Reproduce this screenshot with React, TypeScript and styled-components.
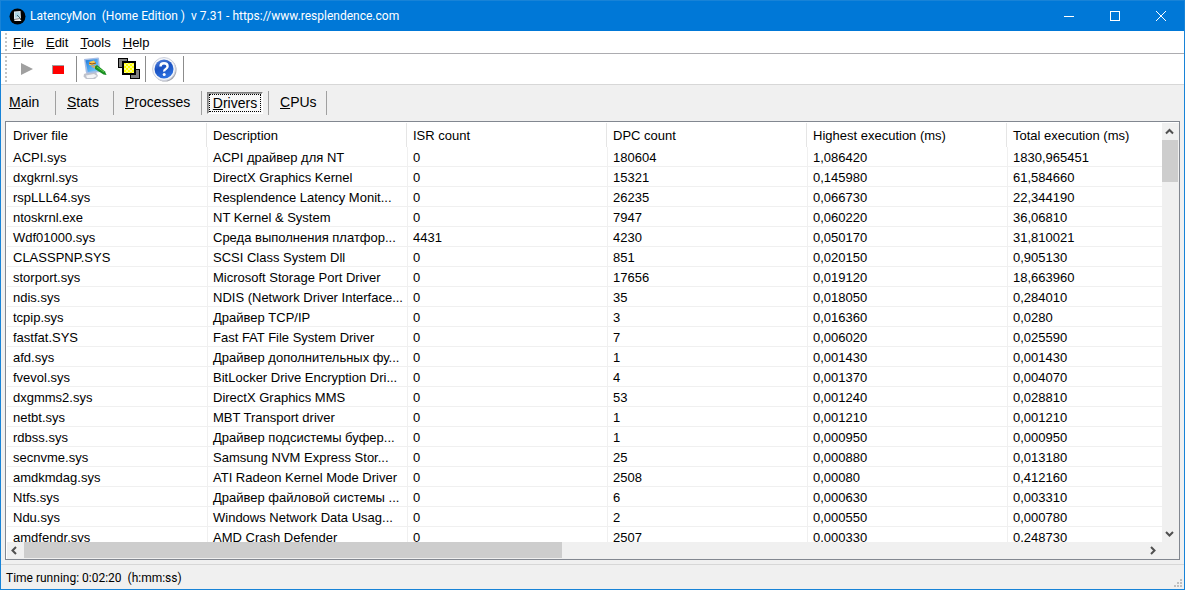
import React from "react";
import styled, { createGlobalStyle, css } from "styled-components";

const GlobalStyle = createGlobalStyle`
  * { box-sizing: border-box; }
  body {
    margin: 0;
    background: #f0f0f0;
    color: #000;
    font: 13px/20px "Liberation Sans", Arial, sans-serif;
  }
  button {
    margin: 0;
    padding: 0;
    border: 0;
    background: none;
    color: inherit;
    font: inherit;
  }
`;

const Window = styled.div`
  display: flex;
  flex-direction: column;
  height: 100vh;
  border: 1px solid #1883d7;
  border-top: 0;
  background: #f0f0f0;
`;

const TitleBar = styled.header`
  display: flex;
  align-items: center;
  flex: none;
  height: 31px;
  padding-left: 8px;
  border-top: 1px solid #1883d7;
  background: #0078d7;
  color: #fff;
`;

const Title = styled.h1`
  flex: 1;
  margin: 0 0 0 4px;
  font: 400 12px/16px Roboto, "Segoe UI", sans-serif;
  white-space: pre;
`;

const CaptionButton = styled.button`
  display: flex;
  align-items: center;
  justify-content: center;
  width: 46px;
  height: 30px;
`;

const MenuBar = styled.nav`
  display: flex;
  align-items: center;
  flex: none;
  height: 23px;
  padding-left: 4px;
  border-bottom: 1px solid #acacb0;
  background: #fff;
`;

const MenuItem = styled.button`
  padding: 2px 6px 0;
`;

const Gripper = styled.span`
  align-self: stretch;
  width: 2px;
  margin-top: 2px;
  background: repeating-linear-gradient(#c4c4c4 0 2px, transparent 2px 4px);
`;

const ToolBar = styled.div`
  display: flex;
  align-items: center;
  flex: none;
  height: 31px;
  padding-left: 4px;
  border-bottom: 1px solid #d7d7d7;
  background: #fff;
`;

const ToolButton = styled.button<{ $width: number }>`
  display: flex;
  align-items: center;
  justify-content: center;
  width: ${(p) => p.$width}px;
  height: 28px;
`;

const ToolSeparator = styled.span<{ $gap?: number }>`
  width: 1px;
  height: 26px;
  margin-left: ${(p) => p.$gap ?? 0}px;
  background: #8c8c8c;
`;

const TabBar = styled.div`
  display: flex;
  align-items: center;
  flex: none;
  height: 36px;
`;

const TabSlot = styled.div<{ $width: number; $inset: number }>`
  display: flex;
  align-items: center;
  width: ${(p) => p.$width}px;
  height: 24px;
  padding-left: ${(p) => p.$inset}px;
  border-right: 1px solid #a0a0a0;
`;

const TabButton = styled.button<{ $active: boolean }>`
  height: 22px;
  padding-bottom: 2px;
  font-size: 14px;
  line-height: 20px;
  ${(p) =>
    p.$active &&
    css`
      width: 56px;
      padding: 0;
      border: 1px solid;
      border-color: #808080 #fff #fff #808080;
      background: #f8f8f8;
      box-shadow: inset 1px 1px #a0a0a0;
      outline: 1px dotted #000;
      outline-offset: -3px;
    `}
`;

const ListFrame = styled.main`
  display: grid;
  grid-template-columns: minmax(0, 1fr) 17px;
  grid-template-rows: minmax(0, 1fr) 17px;
  flex: 1;
  min-height: 0;
  margin: 0 4px 4px;
  padding: 1px 0 0 1px;
  border: 1px solid #828790;
  background: #fff;
`;

const Viewport = styled.div`
  overflow: hidden;
`;

const DriverTable = styled.table`
  width: 1200px;
  table-layout: fixed;
  border-collapse: separate;
  border-spacing: 0;
`;

const HeadCell = styled.th`
  height: 24px;
  padding: 2px 6px 0;
  border-right: 1px solid #e5e5e5;
  font-weight: 400;
  text-align: left;
`;

const Cell = styled.td`
  height: 20px;
  padding: 3px 0 0 6px;
  border-bottom: 1px solid #f0f0f0;
  line-height: 16px;
  white-space: nowrap;
  overflow: hidden;

  & + & {
    padding-left: 5px;
    border-left: 1px solid #f0f0f0;
  }
`;

const ScrollBar = styled.div<{ $vertical?: boolean }>`
  display: flex;
  flex-direction: ${(p) => (p.$vertical ? "column" : "row")};
  background: #f0f0f0;
`;

const ArrowButton = styled.button`
  display: flex;
  align-items: center;
  justify-content: center;
  flex: none;
  width: 17px;
  height: 17px;
  padding: 0 2px 1px 0;
`;

const Track = styled.div<{ $vertical?: boolean }>`
  display: flex;
  flex-direction: ${(p) => (p.$vertical ? "column" : "row")};
  flex: 1;
`;

const Thumb = styled.div<{ $size: string }>`
  flex: 0 0 ${(p) => p.$size};
  margin: 0 1px 1px 0;
  background: #cdcdcd;
`;

const Corner = styled.div`
  background: #f0f0f0;
`;

const StatusBar = styled.footer`
  display: flex;
  align-items: center;
  justify-content: space-between;
  flex: none;
  height: 25px;
  padding: 2px 2px 0 5px;
  border-top: 1px solid #d7d7d7;
  font: 12px/16px Roboto, "Segoe UI", sans-serif;
  white-space: pre;
`;

const Grip = styled.svg`
  align-self: flex-end;
  margin-bottom: 2px;
`;

type Direction = "up" | "down" | "left" | "right";

const chevrons: Record<Direction, string> = {
  up: "M1 6.500 4.500 3 8 6.500",
  down: "M1 3 4.500 6.500 8 3",
  left: "M6 1 2.500 4.500 6 8",
  right: "M3 1 6.500 4.500 3 8",
};

const Chevron = ({ to }: { to: Direction }) => (
  <svg width="9" height="9" viewBox="0 0 9 9" fill="none" stroke="#505050" strokeWidth="2">
    <path d={chevrons[to]} />
  </svg>
);

const AppIcon = () => (
  <svg width="17" height="17" viewBox="0 0 17 17">
    <circle cx="8.500" cy="8.500" r="8" fill="#000" />
    <path d="M5 3.500 11.500 3 12 10.500 5 11Z" fill="#dfe9ee" />
    <path d="M6 4.500 10.500 4.200 10.800 9 6 9.500Z" fill="#a9d3e5" />
    <path d="M5 11.500 11 11 12.500 13H5.500Z" fill="#eee" />
    <path d="m8 7 4 4" stroke="#48676e" />
  </svg>
);

const MonitorIcon = () => (
  <svg width="24" height="24" viewBox="0 0 24 24">
    <defs>
      <linearGradient id="screen" x1="0" y1="0" x2="1" y2="1">
        <stop offset="0" stopColor="#1d79da" />
        <stop offset="1" stopColor="#80d4ff" />
      </linearGradient>
    </defs>
    <path d="M5 15.500 13 15 15 19 12 22 3 22 0.500 19.500 1 17Z" fill="#c0c3cc" />
    <path d="M3 18.500 11 17 14 19 10 21H4Z" fill="#f3f4f6" />
    <path d="m1 2 14-1.500q1 0 1 1L17.500 15l-13 1.500Q3 16 2.800 15Z" fill="#a6bde5" />
    <path d="m2.500 3.300 12-1.400 1.300 11.600-11 1.500Z" fill="url(#screen)" />
    <path d="m6 5 5-1.500 2 3-4 2-3-.5Z" fill="#f8c24c" />
    <path d="m6 6 3 1 4-1" fill="none" stroke="#8b4c19" />
    <path d="m8 9.500 5-1.500 3 2.500-2 2Z" fill="#d5ac60" />
    <path d="m12 9.500 2-1.500 8 6.500 1.500 3.500-3-.5-8.500-5.500Z" fill="#188d22" />
    <path d="m14 10 7 5" stroke="#66ce4e" />
  </svg>
);

const WindowsIcon = () => (
  <svg width="23" height="22" viewBox="0 0 23 22" shapeRendering="crispEdges">
    <defs>
      <pattern id="check" width="4" height="4" patternUnits="userSpaceOnUse">
        <path fill="#ff0" d="M0 0h4v4H0z" />
        <g fill="#fff" fillOpacity="0.8" shapeRendering="auto">
          <circle cx="1" cy="1" r="0.900" />
          <circle cx="3" cy="3" r="0.900" />
        </g>
      </pattern>
    </defs>
    <path fill="#808080" stroke="#000" d="M.5.5h9v9h-9zM12.500 11.500h9v9h-9z" />
    <path fill="url(#check)" stroke="#000" strokeWidth="2" d="M5 4h12v12H5z" />
  </svg>
);

const HelpIcon = () => (
  <svg width="25" height="25" viewBox="0 0 25 25">
    <defs>
      <linearGradient id="globe" x1="0" y1="0" x2="0.4" y2="1">
        <stop offset="0" stopColor="#5b88df" />
        <stop offset="0.5" stopColor="#1a52c2" />
        <stop offset="1" stopColor="#2c70df" />
      </linearGradient>
    </defs>
    <circle cx="13" cy="13" r="11.500" fill="#a4a7b0" />
    <circle cx="12" cy="12" r="11.500" fill="#f3f5fa" stroke="#ccd0dc" />
    <circle cx="12" cy="12" r="9.500" fill="url(#globe)" />
    <path
      d="M8.500 9.500Q8.500 6.300 12 6.300T15.600 9.300Q15.600 11 13.800 12T12.200 14.500"
      fill="none"
      stroke="#fff"
      strokeWidth="2.400"
    />
    <circle cx="12.200" cy="17.500" r="1.500" fill="#fff" />
  </svg>
);

const columns = [
  "Driver file",
  "Description",
  "ISR count",
  "DPC count",
  "Highest execution (ms)",
  "Total execution (ms)",
];

const drivers: string[][] = [
  ["ACPI.sys", "ACPI драйвер для NT", "0", "180604", "1,086420", "1830,965451"],
  ["dxgkrnl.sys", "DirectX Graphics Kernel", "0", "15321", "0,145980", "61,584660"],
  ["rspLLL64.sys", "Resplendence Latency Monit...", "0", "26235", "0,066730", "22,344190"],
  ["ntoskrnl.exe", "NT Kernel & System", "0", "7947", "0,060220", "36,06810"],
  ["Wdf01000.sys", "Среда выполнения платфор...", "4431", "4230", "0,050170", "31,810021"],
  ["CLASSPNP.SYS", "SCSI Class System Dll", "0", "851", "0,020150", "0,905130"],
  ["storport.sys", "Microsoft Storage Port Driver", "0", "17656", "0,019120", "18,663960"],
  ["ndis.sys", "NDIS (Network Driver Interface...", "0", "35", "0,018050", "0,284010"],
  ["tcpip.sys", "Драйвер TCP/IP", "0", "3", "0,016360", "0,0280"],
  ["fastfat.SYS", "Fast FAT File System Driver", "0", "7", "0,006020", "0,025590"],
  ["afd.sys", "Драйвер дополнительных фу...", "0", "1", "0,001430", "0,001430"],
  ["fvevol.sys", "BitLocker Drive Encryption Dri...", "0", "4", "0,001370", "0,004070"],
  ["dxgmms2.sys", "DirectX Graphics MMS", "0", "53", "0,001240", "0,028810"],
  ["netbt.sys", "MBT Transport driver", "0", "1", "0,001210", "0,001210"],
  ["rdbss.sys", "Драйвер подсистемы буфер...", "0", "1", "0,000950", "0,000950"],
  ["secnvme.sys", "Samsung NVM Express Stor...", "0", "25", "0,000880", "0,013180"],
  ["amdkmdag.sys", "ATI Radeon Kernel Mode Driver", "0", "2508", "0,00080", "0,412160"],
  ["Ntfs.sys", "Драйвер файловой системы ...", "0", "6", "0,000630", "0,003310"],
  ["Ndu.sys", "Windows Network Data Usag...", "0", "2", "0,000550", "0,000780"],
  ["amdfendr.sys", "AMD Crash Defender", "0", "2507", "0,000330", "0,248730"],
];

const tabs = [
  { label: "Main", width: 55, inset: 8 },
  { label: "Stats", width: 58, inset: 11 },
  { label: "Processes", width: 88, inset: 11 },
  { label: "Drivers", width: 67, inset: 5 },
  { label: "CPUs", width: 58, inset: 11 },
];

const Mnemonic = ({ text }: { text: string }) => (
  <>
    <u>{text[0]}</u>
    {text.slice(1)}
  </>
);

export default function App() {
  const [active, setActive] = React.useState("Drivers");
  return (
    <Window>
      <GlobalStyle />
      <TitleBar>
        <AppIcon />
        <Title>{"LatencyMon  (Home Edition )  v 7.31 - https://www.resplendence.com"}</Title>
        <CaptionButton aria-label="Minimize">
          <svg width="10" height="10" shapeRendering="crispEdges">
            <path d="M0 5.500h10" stroke="#fff" />
          </svg>
        </CaptionButton>
        <CaptionButton aria-label="Maximize">
          <svg width="10" height="10" shapeRendering="crispEdges">
            <path d="M.5.5h9v9h-9z" fill="none" stroke="#fff" />
          </svg>
        </CaptionButton>
        <CaptionButton aria-label="Close">
          <svg width="10" height="10">
            <path d="m0 0 10 10M10 0 0 10" stroke="#fff" />
          </svg>
        </CaptionButton>
      </TitleBar>
      <MenuBar>
        <Gripper />
        {["File", "Edit", "Tools", "Help"].map((item) => (
          <MenuItem key={item}>
            <Mnemonic text={item} />
          </MenuItem>
        ))}
      </MenuBar>
      <ToolBar>
        <Gripper />
        <ToolButton $width={40} aria-label="Start">
          <svg width="12" height="12">
            <path d="M0 0 12 6 0 12Z" fill="#a0a0a0" />
          </svg>
        </ToolButton>
        <ToolButton $width={22} aria-label="Stop">
          <svg width="12" height="9">
            <path d="M0 0h12v9H0z" fill="#a0a0a0" />
            <path d="M1 1h11v8H1z" fill="#f00" />
          </svg>
        </ToolButton>
        <ToolSeparator $gap={7} />
        <ToolButton $width={36} aria-label="Options">
          <MonitorIcon />
        </ToolButton>
        <ToolButton $width={32} aria-label="Windows">
          <WindowsIcon />
        </ToolButton>
        <ToolSeparator />
        <ToolButton $width={37} aria-label="Help contents">
          <HelpIcon />
        </ToolButton>
        <ToolSeparator />
      </ToolBar>
      <TabBar role="tablist">
        {tabs.map((tab) => (
          <TabSlot key={tab.label} $width={tab.width} $inset={tab.inset}>
            <TabButton
              role="tab"
              aria-selected={active === tab.label}
              $active={active === tab.label}
              onClick={() => setActive(tab.label)}
            >
              <Mnemonic text={tab.label} />
            </TabButton>
          </TabSlot>
        ))}
      </TabBar>
      <ListFrame>
        <Viewport>
          <DriverTable>
            <thead>
              <tr>
                {columns.map((name) => (
                  <HeadCell key={name} scope="col">
                    {name}
                  </HeadCell>
                ))}
              </tr>
            </thead>
            <tbody>
              {drivers.map((row) => (
                <tr key={row[0]}>
                  {row.map((value, i) => (
                    <Cell key={i}>{value}</Cell>
                  ))}
                </tr>
              ))}
            </tbody>
          </DriverTable>
        </Viewport>
        <ScrollBar $vertical>
          <ArrowButton aria-label="Scroll up">
            <Chevron to="up" />
          </ArrowButton>
          <Track $vertical>
            <Thumb $size="42px" />
          </Track>
          <ArrowButton aria-label="Scroll down">
            <Chevron to="down" />
          </ArrowButton>
        </ScrollBar>
        <ScrollBar>
          <ArrowButton aria-label="Scroll left">
            <Chevron to="left" />
          </ArrowButton>
          <Track>
            <Thumb $size="48%" />
          </Track>
          <ArrowButton aria-label="Scroll right">
            <Chevron to="right" />
          </ArrowButton>
        </ScrollBar>
        <Corner />
      </ListFrame>
      <StatusBar>
        <span>{"Time running: 0:02:20  (h:mm:ss)"}</span>
        <Grip width="8" height="8" fill="#bfbfbf" shapeRendering="crispEdges">
          <path d="M6 0h2v2H6zM3 3h2v2H3zM6 3h2v2H6zM0 6h2v2H0zM3 6h2v2H3zM6 6h2v2H6z" />
        </Grip>
      </StatusBar>
    </Window>
  );
}
